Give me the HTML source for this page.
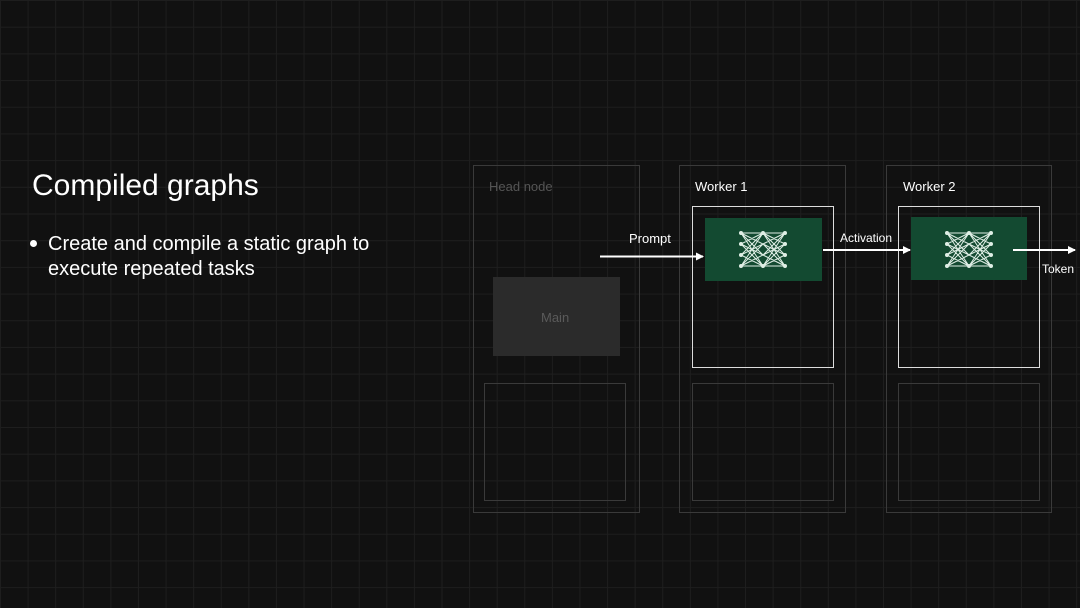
<!DOCTYPE html>
<html><head><style>
body{margin:0;width:1080px;height:608px;overflow:hidden;background:#111;font-family:"Liberation Sans",sans-serif;position:relative;
background-image:linear-gradient(#1e1e1e 1px,transparent 1px),linear-gradient(90deg,#1e1e1e 1px,transparent 1px);background-size:27.6px 26.7px;background-position:0 0;}
.a{position:absolute;}
.b{position:absolute;box-sizing:border-box;}
.t{position:absolute;color:#fff;font-size:13px;white-space:nowrap}
</style></head><body>
<div class="t" style="left:32px;top:169px;font-size:30px;">Compiled graphs</div>
<div class="a" style="left:30px;top:240px;width:7px;height:7px;border-radius:50%;background:#fff"></div>
<div class="t" style="left:48px;top:232px;font-size:20px;line-height:25px;">Create and compile a static graph to<br>execute repeated tasks</div>

<div class="b" style="left:473px;top:165px;width:167px;height:348px;border:1px solid #3a3a3a"></div>
<div class="t" style="left:489px;top:179px;color:#555">Head node</div>
<div class="b" style="left:493px;top:277px;width:127px;height:79px;background:#2b2b2b"></div>
<div class="t" style="left:541px;top:310px;color:#5a5a5a">Main</div>
<div class="b" style="left:484px;top:383px;width:142px;height:118px;border:1px solid #3a3a3a"></div>

<div class="b" style="left:679px;top:165px;width:167px;height:348px;border:1px solid #3a3a3a"></div>
<div class="t" style="left:695px;top:179px;">Worker 1</div>
<div class="b" style="left:692px;top:206px;width:142px;height:162px;border:1px solid #ddd"></div>
<div class="b" style="left:705px;top:218px;width:117px;height:63px;background:#134a31"></div>
<div class="b" style="left:692px;top:383px;width:142px;height:118px;border:1px solid #3a3a3a"></div>

<div class="b" style="left:886px;top:165px;width:166px;height:348px;border:1px solid #3a3a3a"></div>
<div class="t" style="left:903px;top:179px;">Worker 2</div>
<div class="b" style="left:898px;top:206px;width:142px;height:162px;border:1px solid #ddd"></div>
<div class="b" style="left:911px;top:217px;width:116px;height:63px;background:#134a31"></div>
<div class="b" style="left:898px;top:383px;width:142px;height:118px;border:1px solid #3a3a3a"></div>

<div class="t" style="left:629px;top:231px;">Prompt</div>
<div class="t" style="left:840px;top:231px;font-size:12px">Activation</div>
<div class="t" style="left:1042px;top:262px;font-size:12px">Token</div>

<svg class="a" style="left:0;top:0" width="1080" height="608">
<defs><marker id="m" markerWidth="8" markerHeight="8" refX="7" refY="4" orient="auto" markerUnits="userSpaceOnUse"><path d="M0,0L8,4L0,8z" fill="#fff"/></marker>
<g id="n" stroke="#dfeee5" stroke-width="1" fill="#dfeee5">
<path d="M0,0L22,0M22,0L44,0M0,33L44,33" fill="none"/>
<path d="M0,0L22,11M0,0L22,22M0,0L22,33M0,11L22,0M0,11L22,22M0,11L22,33M0,22L22,0M0,22L22,11M0,22L22,33M0,33L22,0M0,33L22,11M0,33L22,22M22,0L44,11M22,0L44,22M22,0L44,33M22,11L44,0M22,11L44,22M22,11L44,33M22,22L44,0M22,22L44,11M22,22L44,33M22,33L44,0M22,33L44,11M22,33L44,22" fill="none"/>
<circle cx="0" cy="0" r="1.5"/><circle cx="0" cy="11" r="1.5"/><circle cx="0" cy="22" r="1.5"/><circle cx="0" cy="33" r="1.5"/>
<circle cx="22" cy="0" r="1.5"/><circle cx="22" cy="33" r="1.5"/>
<circle cx="44" cy="0" r="1.5"/><circle cx="44" cy="11" r="1.5"/><circle cx="44" cy="22" r="1.5"/><circle cx="44" cy="33" r="1.5"/>
</g></defs>
<use href="#n" x="741" y="233"/>
<use href="#n" x="947" y="233"/>
<line x1="600" y1="256.5" x2="703" y2="256.5" stroke="#fff" stroke-width="2" marker-end="url(#m)"/>
<line x1="823" y1="250" x2="910" y2="250" stroke="#fff" stroke-width="2" marker-end="url(#m)"/>
<line x1="1013" y1="250" x2="1075" y2="250" stroke="#fff" stroke-width="2" marker-end="url(#m)"/>
</svg>
</body></html>
